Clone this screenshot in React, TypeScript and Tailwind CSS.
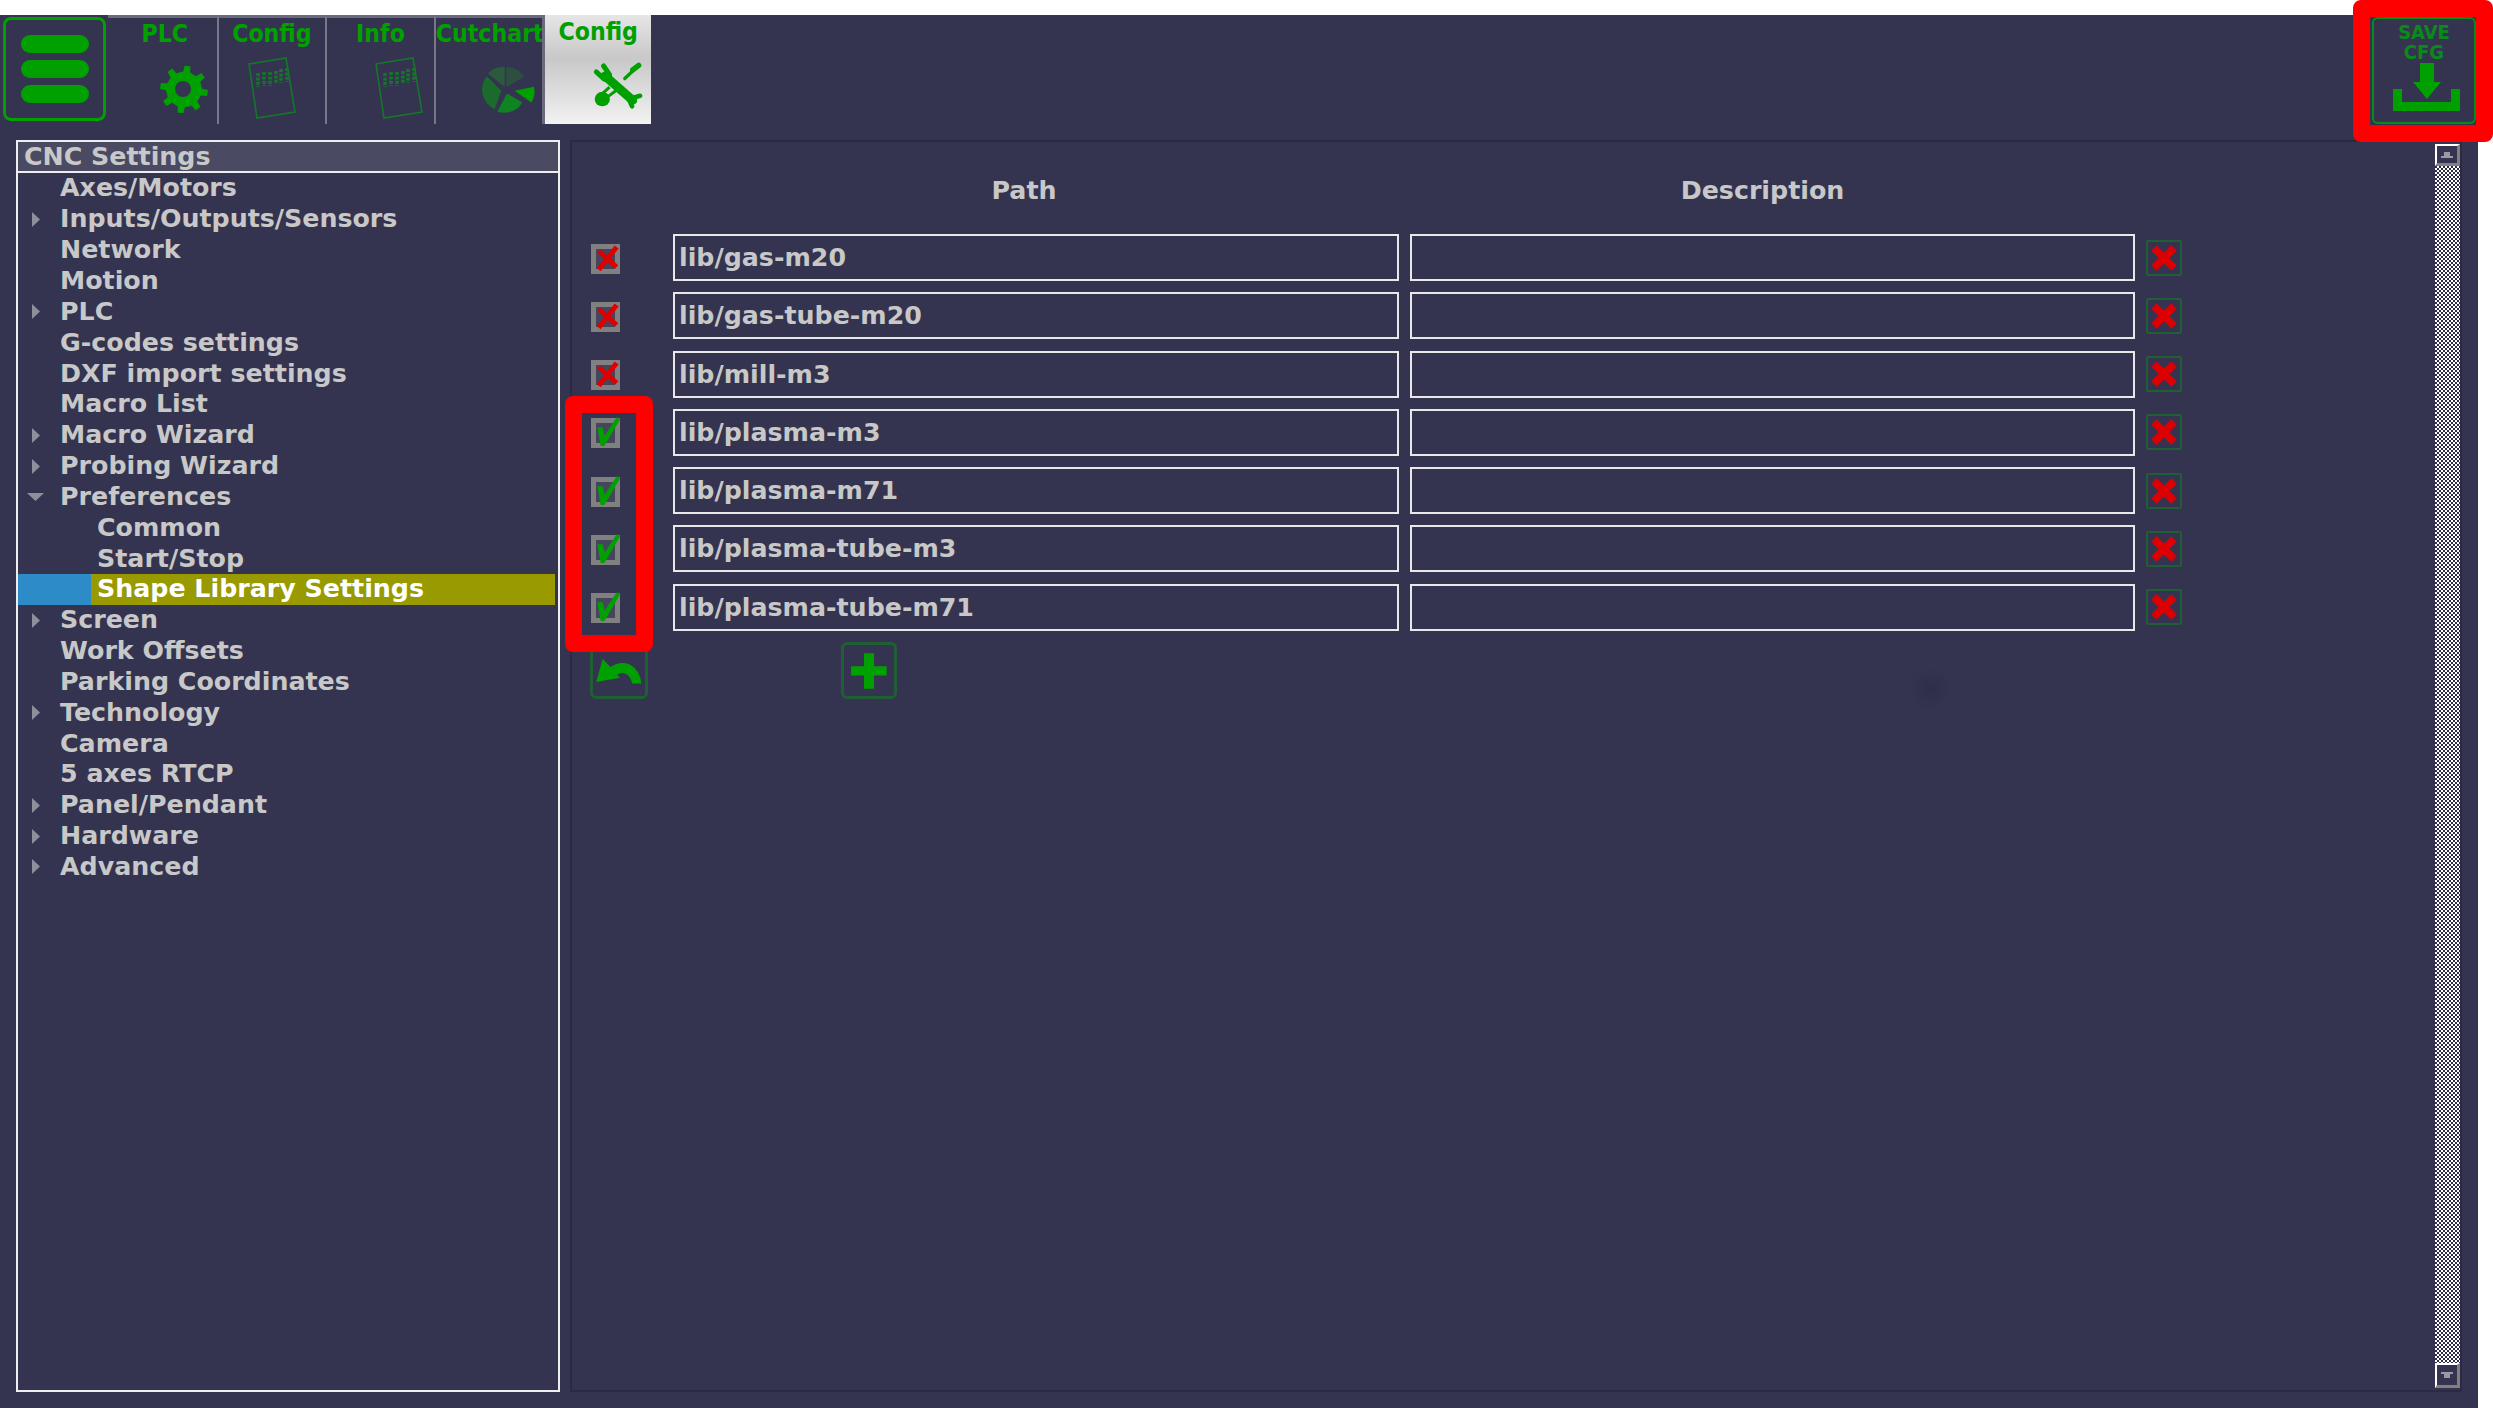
import type { ReactNode } from 'react';

const GREEN = '#00a000';

// Gear outline, 8 teeth
function gearPath(cx: number, cy: number, outer: number, inner: number, teeth: number, rot: number) {
  const pts: string[] = [];
  const step = (Math.PI * 2) / teeth;
  for (let i = 0; i < teeth; i++) {
    const a = i * step + rot;
    const w = step * 0.2;
    const at = (r: number, t: number) => `${(cx + r * Math.cos(t)).toFixed(1)} ${(cy + r * Math.sin(t)).toFixed(1)}`;
    pts.push(at(inner, a - w * 1.25), at(outer, a - w * 0.8), at(outer, a + w * 0.8), at(inner, a + w * 1.25));
  }
  return `M${pts.join('L')}Z`;
}

function GearIcon() {
  return (
    <svg width="48" height="47" viewBox="0 0 48 47">
      <path d={gearPath(24, 23.5, 24, 18, 8, 0.15)} fill={GREEN} />
      <circle cx="24" cy="23.5" r="16" fill={GREEN} />
      <circle cx="23" cy="23" r="8" fill="#343450" />
    </svg>
  );
}

function CardIcon() {
  const ticks = [
    [10, 16, 28],
    [16, 15, 27],
    [22, 15, 27],
    [28, 14, 25],
    [33, 12, 24],
    [39, 11, 23],
  ];
  return (
    <svg width="48" height="62" viewBox="0 0 48 62">
      <path d="M1 7L38 1L47 55L9 61Z" fill="none" stroke="#17752b" strokeWidth="1.6" />
      {ticks.map(([x, y1, y2]) => (
        <line key={x} x1={x} y1={y1} x2={x} y2={y2 + 2} stroke="#17752b" strokeWidth="3.5" strokeDasharray="3 1.4" />
      ))}
    </svg>
  );
}

function PieIcon() {
  return (
    <svg width="60" height="52" viewBox="50 40 180 155">
      <path d="M125 105L80 68A62 62 0 0 1 130 48L130 105Z" fill="#2b5a3e" />
      <path d="M135 108L135 48A62 62 0 0 1 188 78L137 108Z" fill="#2d4f42" />
      <path d="M120 120L76 76A65 65 0 0 0 100 175Z" fill="#1b6c2c" />
      <path d="M137 128L108 182A62 62 0 0 0 183 155Z" fill="#0f8222" />
      <path d="M160 120L218 108A60 60 0 0 1 210 155Z" fill={GREEN} />
    </svg>
  );
}

function ToolsIcon() {
  return (
    <svg width="52" height="48" viewBox="400 45 155 145">
      <g stroke={GREEN} fill="none" strokeLinecap="round">
        <path d="M438 90L522 164" strokeWidth="27" />
        <path d="M412 78L436 100M434 60L452 86" strokeWidth="15" />
        <path d="M544 150L516 158M520 182L506 150" strokeWidth="14" />
        <path d="M538 60L498 98" strokeWidth="10" />
        <path d="M522 72L540 58" strokeWidth="16" />
      </g>
      <ellipse cx="430" cy="160" rx="23" ry="22" fill={GREEN} />
      <path d="M432 142L452 124M448 152L472 134" stroke={GREEN} strokeWidth="9" />
    </svg>
  );
}

type Tab = { label: string; icon: ReactNode; iconBox: string; labelBox: string; sep: boolean; active?: boolean };

const tabs: Tab[] = [
  { label: 'PLC', icon: <GearIcon />, iconBox: 'ml-[52px] mt-[15px]', labelBox: 'pl-[5px] leading-[31px]', sep: false },
  { label: 'Config', icon: <CardIcon />, iconBox: 'ml-[29px] mt-[6px]', labelBox: 'leading-[31px]', sep: true },
  { label: 'Info', icon: <CardIcon />, iconBox: 'ml-[48px] mt-[6px]', labelBox: 'leading-[31px]', sep: true },
  { label: 'Cutchart', icon: <PieIcon />, iconBox: 'ml-[42px] mt-[13px]', labelBox: 'leading-[31px]', sep: true },
  { label: 'Config', icon: <ToolsIcon />, iconBox: 'ml-[47px] mt-[13px]', labelBox: 'leading-[33px]', sep: false, active: true },
];

type TreeItem = { label: string; arrow?: 'right' | 'down'; child?: boolean; selected?: boolean };

const tree: TreeItem[] = [
  { label: 'Axes/Motors' },
  { label: 'Inputs/Outputs/Sensors', arrow: 'right' },
  { label: 'Network' },
  { label: 'Motion' },
  { label: 'PLC', arrow: 'right' },
  { label: 'G-codes settings' },
  { label: 'DXF import settings' },
  { label: 'Macro List' },
  { label: 'Macro Wizard', arrow: 'right' },
  { label: 'Probing Wizard', arrow: 'right' },
  { label: 'Preferences', arrow: 'down' },
  { label: 'Common', child: true },
  { label: 'Start/Stop', child: true },
  { label: 'Shape Library Settings', child: true, selected: true },
  { label: 'Screen', arrow: 'right' },
  { label: 'Work Offsets' },
  { label: 'Parking Coordinates' },
  { label: 'Technology', arrow: 'right' },
  { label: 'Camera' },
  { label: '5 axes RTCP' },
  { label: 'Panel/Pendant', arrow: 'right' },
  { label: 'Hardware', arrow: 'right' },
  { label: 'Advanced', arrow: 'right' },
];

const libs = [
  { path: 'lib/gas-m20', on: false },
  { path: 'lib/gas-tube-m20', on: false },
  { path: 'lib/mill-m3', on: false },
  { path: 'lib/plasma-m3', on: true },
  { path: 'lib/plasma-m71', on: true },
  { path: 'lib/plasma-tube-m3', on: true },
  { path: 'lib/plasma-tube-m71', on: true },
];

function TreeRow({ item }: { item: TreeItem }) {
  return (
    <div className="flex h-[30.85px] items-center">
      <div className={`flex h-full shrink-0 items-center justify-center ${item.child ? 'w-[73px]' : 'w-[42px]'} ${item.selected ? 'bg-[#2d8cc8]' : ''}`}>
        {item.arrow === 'right' && (
          <svg width="10" height="17" viewBox="0 0 10 17" className="-ml-[7px]">
            <path d="M1 1L9 8.5L1 16Z" fill="#8f8f9c" />
          </svg>
        )}
        {item.arrow === 'down' && (
          <svg width="17" height="10" viewBox="0 0 17 10" className="-ml-[7px]">
            <path d="M0 1L17 1L8.5 9Z" fill="#8f8f9c" />
          </svg>
        )}
      </div>
      <div className={`flex h-full flex-1 items-center whitespace-nowrap ${item.child ? 'pl-[6px]' : ''} ${item.selected ? 'mr-[3px] bg-[#999900] text-white' : 'text-[#c8c8c8]'}`}>
        {item.label}
      </div>
    </div>
  );
}

function CheckBox({ on }: { on: boolean }) {
  return (
    <div className="relative mt-[2px] h-[30px] w-[29px] border-[5px] border-[#808080] bg-[#45455e]">
      <svg viewBox="93 597 87 87" className="absolute -left-[5px] -top-[5px] h-[29px] w-[29px] overflow-visible">
        {on ? (
          <path d="M112 625L128 625L134 650L170 595L181 600L133 681L122 681Z" fill={GREEN} />
        ) : (
          <path d="M116 628L170 676M170 616L116 684" transform="translate(0 -10)" stroke="#dd0000" strokeWidth="15" />
        )}
      </svg>
    </div>
  );
}

function DeleteButton() {
  return (
    <div className="h-[36px] w-[36px] rounded-[2px] border-2 border-[#1f5f33]">
      <svg viewBox="0 0 32 32" className="h-full w-full">
        <path d="M6 6L26 26M26 6L6 26" stroke="#dd0000" strokeWidth="7.5" />
      </svg>
    </div>
  );
}

export default function App() {
  return (
    <div className="relative h-[1408px] w-[2493px] overflow-hidden bg-white pr-[15px] pt-[15px] font-['DejaVu_Sans',sans-serif] text-[25.3px] font-bold">
      <div className="flex h-full flex-col bg-[#343450]">
        {/* Top toolbar */}
        <div className="flex h-[109px] shrink-0 justify-between">
          <div className="flex">
            <div className="ml-[3px] mt-[2px] flex h-[104px] w-[103px] flex-col items-center justify-center gap-[7px] rounded-[8px] border-[3px] border-[#00a000]">
              <div className="h-[18px] w-[68px] rounded-full bg-[#00a000]" />
              <div className="h-[18px] w-[68px] rounded-full bg-[#00a000]" />
              <div className="h-[18px] w-[68px] rounded-full bg-[#00a000]" />
            </div>
            <div className="ml-[2px] flex">
              {tabs.map((tab, i) => (
                <div
                  key={i}
                  className={`h-full w-[108.6px] ${
                    tab.active
                      ? 'border-l-[3px] border-[#6a6a7c] bg-linear-to-b from-[#e6e6e6] via-[#c8c8c8] via-40% to-[#f2f2f2]'
                      : `border-t-[3px] border-t-[#6a6a7c] ${tab.sep ? 'border-l-2 border-l-[#77778a]' : ''}`
                  }`}
                >
                  <div className={`h-[33px] whitespace-nowrap text-center font-['DejaVu_Sans_Condensed','DejaVu_Sans',sans-serif] text-[24.6px] text-[#00a000] ${tab.labelBox}`}>
                    {tab.label}
                  </div>
                  <div className={tab.iconBox}>{tab.icon}</div>
                </div>
              ))}
            </div>
          </div>
          <div className="mr-[2px] mt-[2px] flex h-[107px] w-[104px] flex-col items-center rounded-[6px] border-2 border-[#0a8a1a] pt-[3px] font-['DejaVu_Sans_Condensed','DejaVu_Sans',sans-serif] text-[20px] leading-[20px] text-[#0a8a1a]">
            <div>SAVE</div>
            <div>CFG</div>
            <svg width="72" height="50" viewBox="0 0 72 50" className="shrink-0">
              <path d="M32 1H46V20H53L39 37L25 20H32Z" fill={GREEN} />
              <path d="M9.5 27V44.5H67.5V27" fill="none" stroke={GREEN} strokeWidth="9" />
            </svg>
          </div>
        </div>

        {/* Main area */}
        <div className="flex min-h-0 flex-1 gap-[10px] pb-[16px] pl-[16px] pr-[16px] pt-[16px]">
          {/* Settings tree */}
          <div className="flex w-[544px] shrink-0 flex-col border-2 border-t-0 border-[#eeeeee]">
            <div className="-mx-[2px] h-[33px] shrink-0 overflow-hidden border-2 border-[#eeeeee] bg-[#4a4a62] pl-[6px] leading-[29px] text-[#c8c8c8]">
              CNC Settings
            </div>
            {tree.map((item) => (
              <TreeRow key={item.label} item={item} />
            ))}
          </div>

          {/* Shape library table */}
          <div className="flex flex-1 border-2 border-[#2a2a44]">
            <div className="relative flex-1 pl-[19px] text-[#c8c8c8]">
              <div className="ml-[82px] flex h-[92px] items-center gap-[11px] pt-[6px]">
                <div className="w-[726px] pr-[24px] text-center">Path</div>
                <div className="w-[725px] pr-[20px] text-center">Description</div>
              </div>
              <div className="flex flex-col gap-[11.25px]">
                {libs.map((lib) => (
                  <div key={lib.path} className="flex h-[47px] items-center">
                    <div className="w-[82px]">
                      <CheckBox on={lib.on} />
                    </div>
                    <input
                      readOnly
                      value={lib.path}
                      className="h-full w-[726px] border-2 border-[#e8e8e8] bg-transparent pl-[4px] font-bold text-[#c8c8c8] outline-none"
                    />
                    <input readOnly value="" className="ml-[11px] h-full w-[725px] border-2 border-[#e8e8e8] bg-transparent outline-none" />
                    <div className="ml-[11px]">
                      <DeleteButton />
                    </div>
                  </div>
                ))}
              </div>
              <div className="mt-[11px] flex">
                <div className="-ml-px h-[57px] w-[58px] rounded-[6px] border-[3px] border-[#1f5f33]">
                  <svg viewBox="96 249 161 160" className="h-full w-full">
                    <path d="M105 365L125 293L150 318C190 290 240 310 247 370L218 370C212 340 190 330 170 342L180 352Z" fill={GREEN} />
                  </svg>
                </div>
                <div className="ml-[193px] h-[57px] w-[56px] rounded-[6px] border-[3px] border-[#1f5f33]">
                  <svg viewBox="852 252 150 152" className="h-full w-full">
                    <path d="M912 276H942V315H980V343H942V383H912V343H873V315H912Z" fill={GREEN} />
                  </svg>
                </div>
              </div>
              {/* faint smudge on the panel */}
              <div className="absolute left-[1337px] top-[525px] h-[44px] w-[44px] rounded-full bg-[radial-gradient(circle,#2e2e48_0%,#343450_70%)]" />
            </div>

            {/* Scrollbar */}
            <div className="my-[2px] flex w-[25px] shrink-0 flex-col">
              <div className="flex h-[22px] shrink-0 items-center justify-center border-2 border-b-[3px] border-r-[3px] border-[#ffffff] border-b-[#808080] border-r-[#808080]">
                <svg width="12" height="6" viewBox="0 0 12 6">
                  <path d="M3 0H9V4H12V6H0V4H3Z" fill="#9a9aa6" />
                </svg>
              </div>
              <div className="flex-1 bg-[repeating-conic-gradient(#ffffff_0_25%,#2c2c48_0_50%)] bg-size-[4px_4px]" />
              <div className="flex h-[25px] shrink-0 items-center justify-center border-2 border-b-[3px] border-r-[3px] border-[#ffffff] border-b-[#808080] border-r-[#808080]">
                <svg width="12" height="6" viewBox="0 0 12 6">
                  <path d="M0 0H12V2H9V6H3V2H0Z" fill="#9a9aa6" />
                </svg>
              </div>
            </div>
          </div>
        </div>
      </div>

      {/* Red annotation boxes */}
      <div className="pointer-events-none absolute left-[2353px] top-0 h-[142px] w-[140px] rounded-[8px] border-[17px] border-[#ff0000]" />
      <div className="pointer-events-none absolute left-[565px] top-[396px] h-[256px] w-[88px] rounded-[8px] border-[17px] border-[#ff0000]" />
    </div>
  );
}
